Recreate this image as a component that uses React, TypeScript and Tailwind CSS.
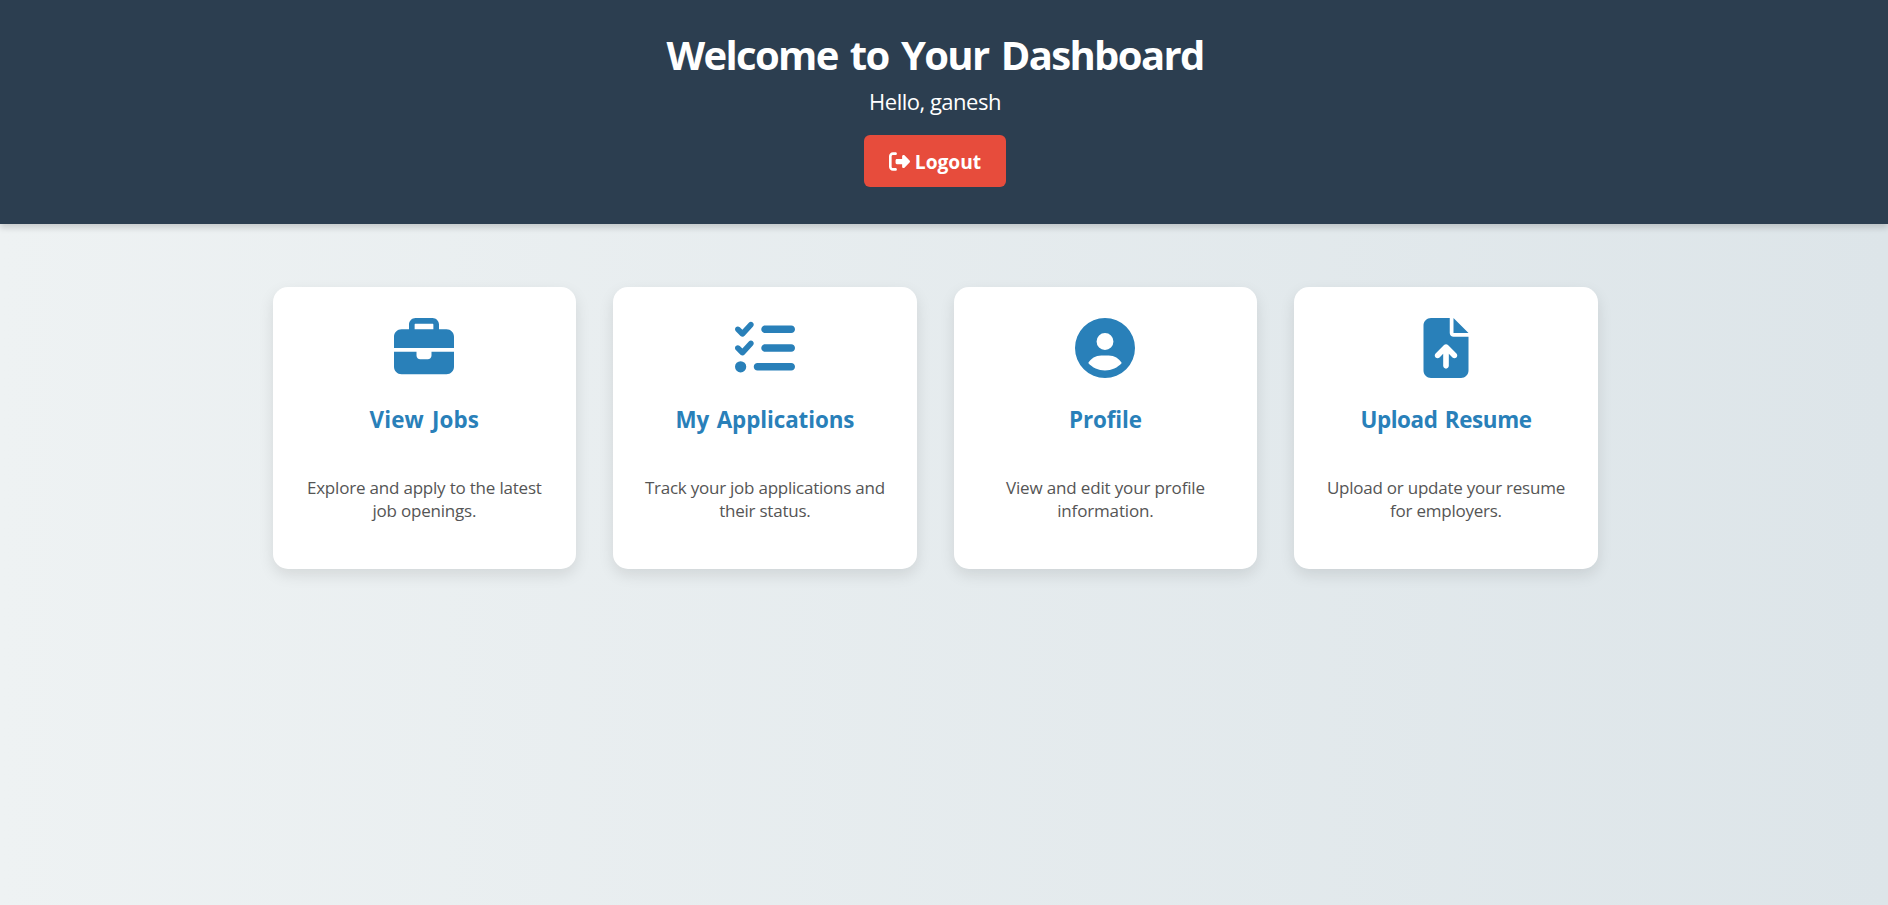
import { FaBriefcase, FaCircleUser, FaFileArrowUp, FaListCheck, FaRightFromBracket } from 'react-icons/fa6';
import type { IconType } from 'react-icons';

type CardData = { icon: IconType; title: string; lines: [string, string]; titleSpacing: string; textSpacing: string };

const cards: CardData[] = [
  { icon: FaBriefcase, title: 'View Jobs', lines: ['Explore and apply to the latest', 'job openings.'], titleSpacing: 'tracking-[0.15px] [word-spacing:2px]', textSpacing: 'tracking-[-0.2px]' },
  { icon: FaListCheck, title: 'My Applications', lines: ['Track your job applications and', 'their status.'], titleSpacing: 'tracking-[-0.1px] [word-spacing:2px]', textSpacing: 'tracking-[-0.24px]' },
  { icon: FaCircleUser, title: 'Profile', lines: ['View and edit your profile', 'information.'], titleSpacing: 'tracking-[-0.1px]', textSpacing: 'tracking-[-0.15px]' },
  { icon: FaFileArrowUp, title: 'Upload Resume', lines: ['Upload or update your resume', 'for employers.'], titleSpacing: 'tracking-[-0.4px] [word-spacing:2px]', textSpacing: 'tracking-[-0.24px]' },
];

function Card({ icon: Icon, title, lines, titleSpacing, textSpacing }: CardData) {
  return (
    <a className="flex h-[282px] flex-col items-center rounded-[15px] bg-white pt-[30.5px] text-center shadow-[0_6px_15px_rgba(0,0,0,0.1)]">
      <Icon className="size-[60px] shrink-0 text-[#2980b9]" />
      <h3 className={`mt-[27.5px] whitespace-nowrap text-[22.4px] font-bold leading-[30px] text-[#2980b9] ${titleSpacing}`}>{title}</h3>
      <p className={`mt-[41px] whitespace-nowrap text-[17px] leading-[23px] text-[#555] ${textSpacing}`}>
        {lines[0]}
        <br />
        {lines[1]}
      </p>
    </a>
  );
}

export default function App() {
  return (
    <div className="min-h-screen bg-[linear-gradient(to_right,#eef2f3,#dde5e9)] font-['Open_Sans','Noto_Sans',sans-serif]">
      <header className="flex h-[224px] flex-col items-center bg-[#2c3e50] pr-[18px] pt-[28px] text-white shadow-[0_4px_6px_rgba(0,0,0,0.15)]">
        <h1 className="whitespace-nowrap text-[40px] font-bold leading-[53px] tracking-[-1.65px] [word-spacing:3.5px]">Welcome to Your Dashboard</h1>
        <p className="mt-[5px] whitespace-nowrap text-[22px] leading-[30px] tracking-[-0.5px]">Hello, ganesh</p>
        <button className="mt-[19px] flex h-[52px] w-[142px] items-center justify-center gap-[5px] rounded-[6px] bg-[#e74c3c] text-[19.2px] font-bold">
          <FaRightFromBracket className="size-[21px]" />
          <span className="pt-[2px]">Logout</span>
        </button>
      </header>
      <main className="grid grid-cols-4 gap-[37.1px] pl-[272.6px] pr-[290.3px] pt-[63px]">
        {cards.map((card) => (
          <Card key={card.title} {...card} />
        ))}
      </main>
    </div>
  );
}
